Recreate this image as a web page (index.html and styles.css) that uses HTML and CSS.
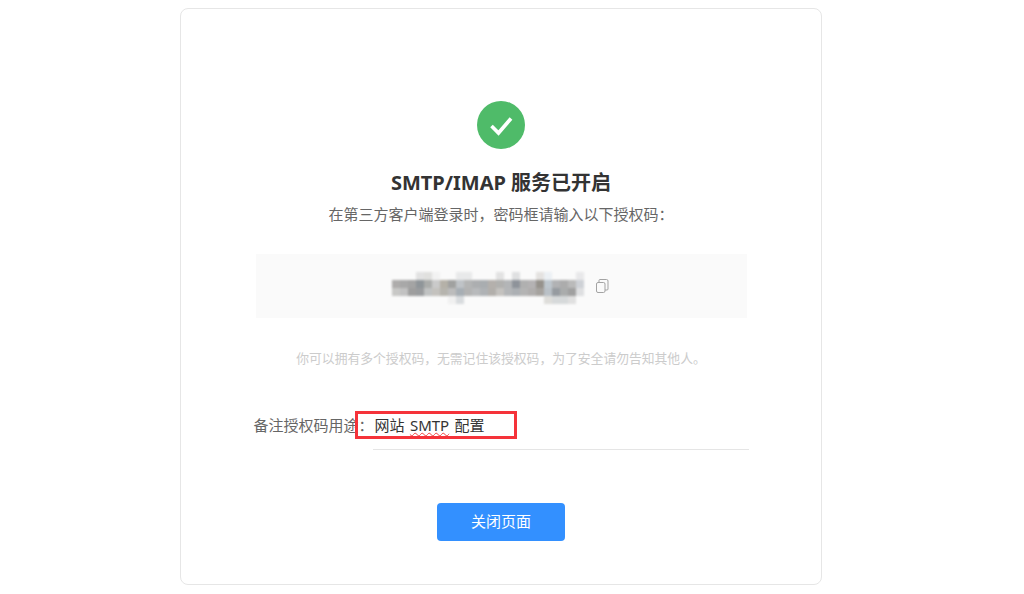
FILE: index.html
```html
<!DOCTYPE html>
<html lang="zh-CN">
<head>
    <meta charset="UTF-8">
    <title>SMTP/IMAP 服务已开启</title>
    <link rel="stylesheet" href="styles.css">
</head>
<body>

    <div class="card">
        <!-- Success icon -->
        <svg class="success-icon" width="48" height="48" viewBox="0 0 48 48">
            <circle cx="24" cy="24" r="24" fill="#4fbb69"/>
            <path d="M14.500 25l7 7 12.500-14.500" fill="none" stroke="#fff" stroke-width="3.600"/>
        </svg>

        <h1 class="title">SMTP/IMAP 服务已开启</h1>
        <p class="subtitle">在第三方客户端登录时，密码框请输入以下授权码：</p>

        <div class="code-box">
            <!-- Pixelated auth code -->
            <svg class="mosaic" width="192" height="32" viewBox="0 0 192 32">
                <g>
                    <rect x="24" y="0" width="8" height="8" fill="#e2e2e2"/>
                    <rect x="32" y="0" width="8" height="8" fill="#e0e0de"/>
                    <rect x="40" y="0" width="8" height="8" fill="#f2f2f2"/>
                    <rect x="64" y="0" width="16" height="8" fill="#e8e9ea"/>
                    <rect x="104" y="0" width="8" height="8" fill="#e2e2e2"/>
                    <rect x="120" y="0" width="8" height="8" fill="#dfe0e1"/>
                    <rect x="144" y="0" width="8" height="8" fill="#e4e2e0"/>
                    <rect x="152" y="0" width="8" height="8" fill="#ecf0f4"/>
                    <rect x="184" y="0" width="8" height="8" fill="#e8e8ea"/>
                </g>
                <g>
                    <rect x="0" y="8" width="8" height="8" fill="#aeacab"/>
                    <rect x="8" y="8" width="8" height="8" fill="#a8a8a8"/>
                    <rect x="16" y="8" width="8" height="8" fill="#a4a4a4"/>
                    <rect x="24" y="8" width="8" height="8" fill="#8f9599"/>
                    <rect x="32" y="8" width="8" height="8" fill="#aaacaa"/>
                    <rect x="40" y="8" width="8" height="8" fill="#cacaca"/>
                    <rect x="48" y="8" width="8" height="8" fill="#b5b1a8"/>
                    <rect x="56" y="8" width="8" height="8" fill="#a0a1a0"/>
                    <rect x="64" y="8" width="8" height="8" fill="#bfc3c7"/>
                    <rect x="72" y="8" width="8" height="8" fill="#b4b5b5"/>
                    <rect x="80" y="8" width="8" height="8" fill="#acaeb0"/>
                    <rect x="88" y="8" width="8" height="8" fill="#a9adb0"/>
                    <rect x="96" y="8" width="8" height="8" fill="#b4b0ac"/>
                    <rect x="104" y="8" width="8" height="8" fill="#b1b1af"/>
                    <rect x="112" y="8" width="8" height="8" fill="#b3b5b7"/>
                    <rect x="120" y="8" width="8" height="8" fill="#8e939a"/>
                    <rect x="128" y="8" width="8" height="8" fill="#b0b0b0"/>
                    <rect x="136" y="8" width="8" height="8" fill="#b4b2b3"/>
                    <rect x="144" y="8" width="8" height="8" fill="#96928c"/>
                    <rect x="152" y="8" width="8" height="8" fill="#bec7ce"/>
                    <rect x="160" y="8" width="8" height="8" fill="#b1b2b4"/>
                    <rect x="168" y="8" width="8" height="8" fill="#acacac"/>
                    <rect x="176" y="8" width="8" height="8" fill="#bababa"/>
                    <rect x="184" y="8" width="8" height="8" fill="#ced1d6"/>
                </g>
                <g>
                    <rect x="0" y="16" width="8" height="8" fill="#c8c8c6"/>
                    <rect x="8" y="16" width="8" height="8" fill="#c2c2c2"/>
                    <rect x="16" y="16" width="8" height="8" fill="#9e9e9e"/>
                    <rect x="24" y="16" width="8" height="8" fill="#9a9c9e"/>
                    <rect x="32" y="16" width="8" height="8" fill="#c0c2c2"/>
                    <rect x="40" y="16" width="8" height="8" fill="#c4c2be"/>
                    <rect x="48" y="16" width="8" height="8" fill="#b6b4ae"/>
                    <rect x="56" y="16" width="8" height="8" fill="#bcbcbc"/>
                    <rect x="64" y="16" width="8" height="8" fill="#a7aeb4"/>
                    <rect x="72" y="16" width="8" height="8" fill="#b3b3b3"/>
                    <rect x="80" y="16" width="8" height="8" fill="#b8babc"/>
                    <rect x="88" y="16" width="8" height="8" fill="#afb2b5"/>
                    <rect x="96" y="16" width="8" height="8" fill="#b2afab"/>
                    <rect x="104" y="16" width="8" height="8" fill="#c4c2bf"/>
                    <rect x="112" y="16" width="8" height="8" fill="#b4b6b8"/>
                    <rect x="120" y="16" width="8" height="8" fill="#acb0b4"/>
                    <rect x="128" y="16" width="8" height="8" fill="#b4b4b4"/>
                    <rect x="136" y="16" width="8" height="8" fill="#b0aead"/>
                    <rect x="144" y="16" width="8" height="8" fill="#a6a39f"/>
                    <rect x="152" y="16" width="8" height="8" fill="#bac1c7"/>
                    <rect x="160" y="16" width="8" height="8" fill="#969ba0"/>
                    <rect x="168" y="16" width="8" height="8" fill="#aaacac"/>
                    <rect x="176" y="16" width="8" height="8" fill="#a0a0a0"/>
                    <rect x="184" y="16" width="8" height="8" fill="#dedfe1"/>
                </g>
                <g>
                    <rect x="56" y="24" width="8" height="8" fill="#f0f0f0"/>
                    <rect x="64" y="24" width="8" height="8" fill="#d8dbde"/>
                    <rect x="152" y="24" width="8" height="8" fill="#deddda"/>
                    <rect x="160" y="24" width="16" height="8" fill="#d6d9da"/>
                    <rect x="176" y="24" width="8" height="8" fill="#e0e0e0"/>
                </g>
            </svg>
            <svg class="copy-icon" width="13" height="14" viewBox="0 0 13 14" fill="none" stroke="#a3a3a3" stroke-width="1">
                <rect x="0.500" y="3.500" width="8.500" height="10" rx="1.500"/>
                <path d="M3 3.500v-2a1 1 0 0 1 1-1h6.500a1.500 1.500 0 0 1 1.500 1.500v8a1 1 0 0 1-1 1h-2"/>
            </svg>
        </div>

        <p class="hint">你可以拥有多个授权码，无需记住该授权码，为了安全请勿告知其他人。</p>

        <div class="note-row">
            <label class="note-label">备注授权码用途：</label>
            <div class="note-input">网站 <span class="spell-error">SMTP</span> 配置</div>
            <!-- Red annotation box -->
            <div class="highlight"></div>
        </div>

        <button class="close-btn">关闭页面</button>
    </div>

</body>
</html>
```

FILE: styles.css
```css
* {
    box-sizing: border-box;
}

body {
    margin: 0;
    padding: 8px 22px 0 0;
    background: #fff;
    font-family: "Noto Sans", "Noto Sans CJK SC", sans-serif;
    color: #333;
}

.card {
    display: flex;
    flex-direction: column;
    align-items: center;
    width: 642px;
    margin: 0 auto;
    padding: 92px 0 43px;
    border: 1px solid #e6e6e6;
    border-radius: 8px;
}

.success-icon {
    display: block;
}

.title {
    margin: 21px 0 0;
    font-size: 20px;
    line-height: 26px;
    font-weight: 700;
    color: #333;
}

.subtitle {
    margin: 7px 0 0;
    font-size: 15px;
    line-height: 22px;
    color: #666;
}

.code-box {
    display: flex;
    align-items: center;
    justify-content: center;
    gap: 12px;
    width: 491px;
    height: 64px;
    margin-top: 29px;
    padding-right: 2px;
    background: #fafafa;
}

.mosaic {
    margin-top: 4px;
    filter: blur(1px);
}

.hint {
    margin: 30px 0 0;
    font-size: 12.8px;
    line-height: 20px;
    color: #ccc;
}

.note-row {
    position: relative;
    display: flex;
    width: 495px;
    margin-top: 43px;
}

.note-label {
    flex: none;
    width: 119px;
    font-size: 15px;
    line-height: 28px;
    color: #666;
    white-space: nowrap;
}

.note-input {
    flex: 1;
    height: 39px;
    padding-left: 2px;
    border-bottom: 1px solid #e5e5e5;
    font-size: 15px;
    line-height: 28px;
    word-spacing: 1.5px;
    color: #333;
}

.spell-error {
    text-decoration: underline wavy #f04040 1px;
    text-underline-offset: 1px;
}

.highlight {
    position: absolute;
    left: 101px;
    top: 0;
    width: 162px;
    height: 28px;
    border: 3px solid #f5333a;
}

.close-btn {
    width: 128px;
    height: 38px;
    margin-top: 53px;
    padding: 0 0 4px;
    border: none;
    border-radius: 4px;
    background: #3390ff;
    color: #fff;
    font-family: inherit;
    font-size: 15px;
    cursor: pointer;
}
```
